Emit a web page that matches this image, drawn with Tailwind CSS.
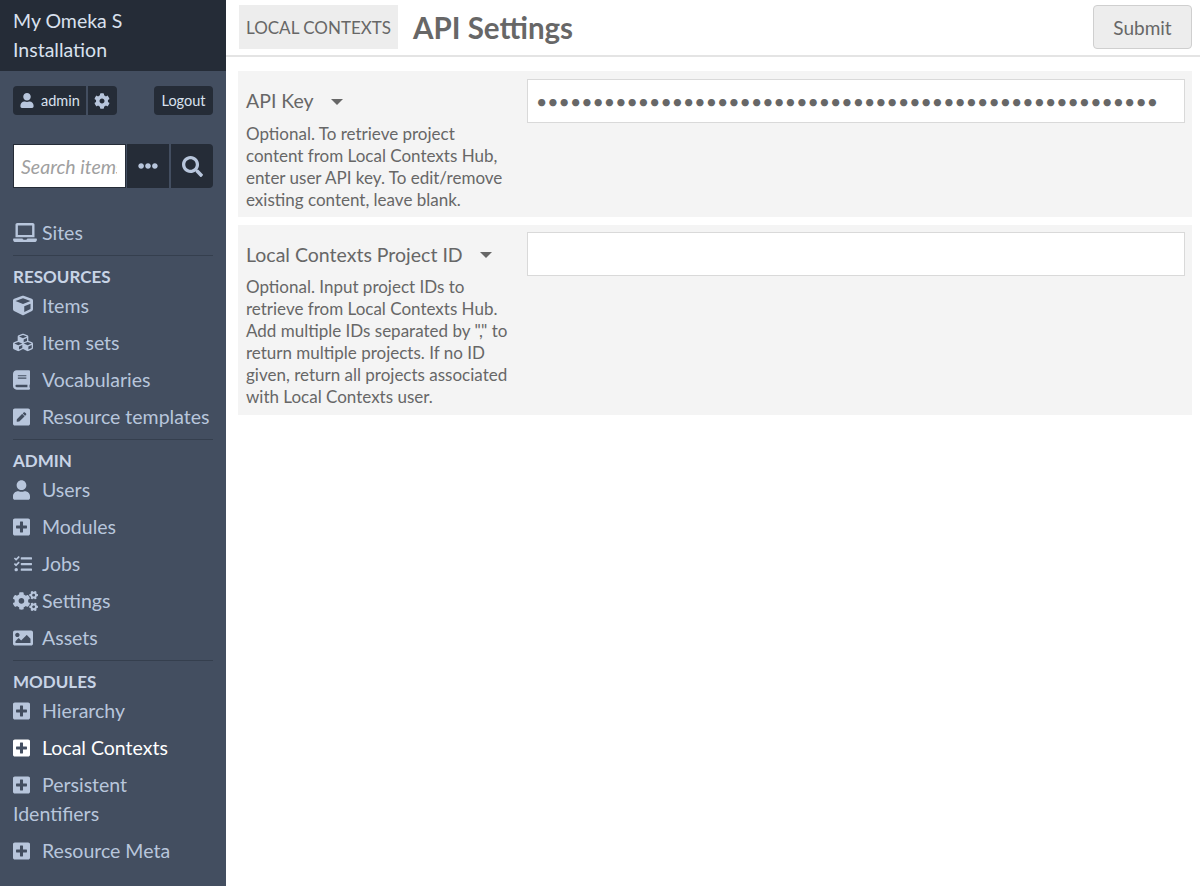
<!DOCTYPE html>
<html lang="en">
<head>
    <meta charset="UTF-8">
    <meta name="viewport" content="width=device-width, initial-scale=1.0">
    <title>API Settings</title>
    <script src="https://cdn.jsdelivr.net/npm/@tailwindcss/browser@4"></script>
</head>
<body class="bg-white font-['Lato','Liberation_Sans',sans-serif] text-[#676767]">

<svg class="hidden">
    <symbol id="i-user" viewBox="0 0 448 512"><path d="M224 256c70.7 0 128-57.3 128-128S294.7 0 224 0 96 57.3 96 128s57.3 128 128 128zm89.6 32h-16.7c-22.2 10.2-46.9 16-72.9 16s-50.6-5.8-72.9-16h-16.7C60.2 288 0 348.2 0 422.4V464c0 26.5 21.5 48 48 48h352c26.5 0 48-21.5 48-48v-41.6c0-74.2-60.2-134.4-134.4-134.4z"/></symbol>
    <symbol id="i-cog" viewBox="0 0 512 512"><path d="M487.4 315.7l-42.6-24.6c4.3-23.2 4.3-47 0-70.2l42.6-24.6c4.9-2.8 7.1-8.6 5.5-14-11.1-35.6-30-67.8-54.7-94.6-3.8-4.1-10-5.1-14.8-2.3L380.8 110c-17.9-15.4-38.5-27.3-60.8-35.1V25.8c0-5.6-3.9-10.5-9.4-11.7-36.7-8.2-74.3-7.8-109.2 0-5.5 1.2-9.4 6.1-9.4 11.7V75c-22.2 7.9-42.8 19.8-60.8 35.1L88.7 85.5c-4.9-2.8-11-1.9-14.8 2.3-24.7 26.7-43.6 58.9-54.7 94.6-1.7 5.4.6 11.2 5.5 14L67.3 221c-4.3 23.2-4.3 47 0 70.2l-42.6 24.6c-4.9 2.8-7.1 8.6-5.5 14 11.1 35.6 30 67.8 54.7 94.6 3.8 4.1 10 5.1 14.8 2.3l42.6-24.6c17.9 15.4 38.5 27.3 60.8 35.1v49.2c0 5.6 3.9 10.5 9.4 11.7 36.7 8.2 74.3 7.8 109.2 0 5.5-1.2 9.4-6.1 9.4-11.7v-49.2c22.2-7.9 42.8-19.8 60.8-35.1l42.6 24.6c4.9 2.8 11 1.9 14.8-2.3 24.7-26.7 43.6-58.9 54.7-94.6 1.5-5.5-.7-11.3-5.6-14.1zM256 336c-44.1 0-80-35.9-80-80s35.9-80 80-80 80 35.9 80 80-35.9 80-80 80z"/></symbol>
    <symbol id="i-search" viewBox="0 0 512 512"><path d="M505 442.7L405.3 343c-4.5-4.5-10.6-7-17-7H372c27.6-35.3 44-79.7 44-128C416 93.1 322.9 0 208 0S0 93.1 0 208s93.1 208 208 208c48.3 0 92.7-16.4 128-44v16.3c0 6.4 2.5 12.5 7 17l99.7 99.7c9.4 9.4 24.6 9.4 33.9 0l28.3-28.3c9.4-9.4 9.4-24.6.1-34zM208 336c-70.7 0-128-57.2-128-128 0-70.7 57.2-128 128-128 70.7 0 128 57.2 128 128 0 70.7-57.2 128-128 128z"/></symbol>
    <symbol id="i-dots" viewBox="0 0 512 512"><path d="M328 256c0 39.8-32.2 72-72 72s-72-32.2-72-72 32.2-72 72-72 72 32.2 72 72zm104-72c-39.8 0-72 32.2-72 72s32.2 72 72 72 72-32.2 72-72-32.2-72-72-72zm-352 0c-39.8 0-72 32.2-72 72s32.2 72 72 72 72-32.2 72-72-32.2-72-72-72z"/></symbol>
    <symbol id="i-laptop" viewBox="0 0 640 512"><path d="M624 416H381.54c-.74 19.81-14.71 32-32.74 32H288c-18.69 0-33.02-17.47-32.77-32H16c-8.8 0-16 7.2-16 16v16c0 35.2 28.8 64 64 64h512c35.2 0 64-28.8 64-64v-16c0-8.8-7.2-16-16-16zM576 48c0-26.4-21.6-48-48-48H112C85.6 0 64 21.6 64 48v336h512V48zm-64 272H128V64h384v256z"/></symbol>
    <symbol id="i-cube" viewBox="0 0 512 512"><path d="M239.1 6.3l-208 78c-18.7 7-31.1 25-31.1 45v225.1c0 18.2 10.3 34.8 26.5 42.9l208 104c13.5 6.8 29.4 6.8 42.9 0l208-104c16.3-8.1 26.5-24.8 26.5-42.9V129.3c0-20-12.4-37.9-31.1-44.9l-208-78C262 2.2 250 2.2 239.1 6.3zM256 68.4l192 72v1.1l-192 78-192-78v-1.1l192-72zm32 356V275.5l160-65v133.9l-160 80z"/></symbol>
    <symbol id="i-cubes" viewBox="0 0 512 512"><path d="M488.6 250.2L392 214V105.5c0-15-9.3-28.4-23.4-33.7l-100-37.5c-8.1-3.1-17.1-3.1-25.3 0l-100 37.5c-14.1 5.3-23.4 18.7-23.4 33.7V214l-96.6 36.2C9.3 255.5 0 268.9 0 283.9V394c0 13.6 7.7 26.1 19.9 32.2l100 50c10.1 5.1 22.1 5.1 32.2 0l103.9-52 103.9 52c10.1 5.1 22.1 5.1 32.2 0l100-50c12.2-6.1 19.9-18.6 19.9-32.2V283.9c0-15-9.3-28.4-23.4-33.7zM358 214.8l-85 31.9v-68.2l85-37v73.3zM154 104.1l102-38.2 102 38.2v.6l-102 41.4-102-41.4v-.6zm84 291.1l-85 42.5v-79.1l85-38.8v75.4zm0-112l-102 41.4-102-41.4v-.6l102-38.2 102 38.2v.6zm240 112l-85 42.5v-79.1l85-38.8v75.4zm0-112l-102 41.4-102-41.4v-.6l102-38.2 102 38.2v.6z"/></symbol>
    <symbol id="i-book" viewBox="0 0 448 512"><path d="M448 360V24c0-13.3-10.7-24-24-24H96C43 0 0 43 0 96v320c0 53 43 96 96 96h328c13.3 0 24-10.7 24-24v-16c0-7.5-3.5-14.3-8.9-18.7-4.2-15.4-4.2-59.3 0-74.7 5.4-4.3 8.9-11.1 8.9-18.6zM128 134c0-3.3 2.7-6 6-6h212c3.3 0 6 2.7 6 6v20c0 3.3-2.7 6-6 6H134c-3.3 0-6-2.7-6-6v-20zm0 64c0-3.3 2.7-6 6-6h212c3.3 0 6 2.7 6 6v20c0 3.3-2.7 6-6 6H134c-3.3 0-6-2.7-6-6v-20zm253.4 250H96c-17.7 0-32-14.3-32-32 0-17.6 14.4-32 32-32h285.4c-1.9 17.1-1.9 46.9 0 64z"/></symbol>
    <symbol id="i-pencil" viewBox="0 0 448 512"><path d="M400 480H48c-26.5 0-48-21.5-48-48V80c0-26.5 21.5-48 48-48h352c26.5 0 48 21.5 48 48v352c0 26.5-21.5 48-48 48zM238.1 177.9L102.4 313.6l-6.3 57.1c-.8 7.6 5.6 14.1 13.3 13.3l57.1-6.3L302.2 242c2.3-2.3 2.3-6.1 0-8.5L246.7 178c-2.5-2.4-6.3-2.4-8.6-.1zM345 165.1L314.9 135c-9.4-9.4-24.6-9.4-33.9 0l-23.1 23.1c-2.3 2.3-2.3 6.1 0 8.5l55.5 55.5c2.3 2.3 6.1 2.3 8.5 0L345 199c9.3-9.3 9.3-24.5 0-33.9z"/></symbol>
    <symbol id="i-plus" viewBox="0 0 448 512"><path d="M400 32H48C21.5 32 0 53.5 0 80v352c0 26.5 21.5 48 48 48h352c26.5 0 48-21.5 48-48V80c0-26.5-21.5-48-48-48zm-32 252c0 6.6-5.4 12-12 12h-92v92c0 6.6-5.4 12-12 12h-56c-6.6 0-12-5.4-12-12v-92H92c-6.6 0-12-5.4-12-12v-56c0-6.6 5.4-12 12-12h92v-92c0-6.6 5.4-12 12-12h56c6.6 0 12 5.4 12 12v92h92c6.6 0 12 5.4 12 12v56z"/></symbol>
    <symbol id="i-tasks" viewBox="0 0 512 512"><path d="M139.61 35.5a12 12 0 0 0-17 0L58.93 98.81l-22.7-22.12a12 12 0 0 0-17 0L3.53 92.41a12 12 0 0 0 0 17l47.59 47.4a12.78 12.78 0 0 0 17.61 0l15.59-15.62L156.52 69a12.09 12.09 0 0 0 .09-17zm0 159.19a12 12 0 0 0-17 0l-63.68 63.72-22.7-22.1a12 12 0 0 0-17 0L3.53 252a12 12 0 0 0 0 17L51 316.5a12.77 12.77 0 0 0 17.6 0l15.7-15.69 72.2-72.22a12 12 0 0 0 .09-16.9zM64 368c-26.49 0-48.59 21.5-48.59 48S37.53 464 64 464a48 48 0 0 0 0-96zm432 16H208a16 16 0 0 0-16 16v32a16 16 0 0 0 16 16h288a16 16 0 0 0 16-16v-32a16 16 0 0 0-16-16zm0-320H208a16 16 0 0 0-16 16v32a16 16 0 0 0 16 16h288a16 16 0 0 0 16-16V80a16 16 0 0 0-16-16zm0 160H208a16 16 0 0 0-16 16v32a16 16 0 0 0 16 16h288a16 16 0 0 0 16-16v-32a16 16 0 0 0-16-16z"/></symbol>
    <symbol id="i-cogs" viewBox="0 0 640 512"><path d="M512.1 191l-8.2 14.3c-3 5.3-9.4 7.5-15.1 5.4-11.8-4.4-22.6-10.7-32.1-18.6-4.6-3.8-5.8-10.5-2.8-15.7l8.2-14.3c-6.9-8-12.3-17.3-15.9-27.4h-16.5c-6 0-11.2-4.3-12.2-10.3-2-12-2.1-24.6 0-37.1 1-6 6.2-10.4 12.2-10.4h16.5c3.6-10.1 9-19.4 15.9-27.4l-8.2-14.3c-3-5.2-1.9-11.9 2.8-15.7 9.5-7.9 20.4-14.2 32.1-18.6 5.7-2.1 12.1.1 15.1 5.4l8.2 14.3c10.5-1.9 21.2-1.9 31.7 0L552 6.3c3-5.3 9.4-7.5 15.1-5.4 11.8 4.4 22.6 10.7 32.1 18.6 4.6 3.8 5.8 10.5 2.8 15.7l-8.2 14.3c6.9 8 12.3 17.3 15.9 27.4h16.5c6 0 11.2 4.3 12.2 10.3 2 12 2.1 24.6 0 37.1-1 6-6.2 10.4-12.2 10.4h-16.5c-3.6 10.1-9 19.4-15.9 27.4l8.2 14.3c3 5.2 1.9 11.9-2.8 15.7-9.5 7.9-20.4 14.2-32.1 18.6-5.7 2.1-12.1-.1-15.1-5.4l-8.2-14.3c-10.4 1.9-21.2 1.9-31.7 0zm-10.5-58.8c38.5 29.6 82.4-14.3 52.8-52.8-38.5-29.7-82.4 14.3-52.8 52.8zM386.3 286.1l33.7 16.8c10.1 5.8 14.5 18.1 10.5 29.1-8.9 24.2-26.4 46.4-42.6 65.8-7.4 8.9-20.2 11.1-30.3 5.3l-29.1-16.8c-16 13.7-34.6 24.6-54.9 31.7v33.6c0 11.6-8.3 21.6-19.7 23.6-24.6 4.2-50.4 4.4-75.9 0-11.5-2-20-11.9-20-23.6V418c-20.3-7.2-38.9-18-54.9-31.7L74 403c-10 5.8-22.9 3.6-30.3-5.3-16.2-19.4-33.3-41.6-42.2-65.7-4-10.9.4-23.2 10.5-29.1l33.3-16.8c-3.9-20.9-3.9-42.4 0-63.4L12 205.8c-10.1-5.8-14.6-18.1-10.5-29 8.9-24.2 26-46.4 42.2-65.8 7.4-8.9 20.2-11.1 30.3-5.3l29.1 16.8c16-13.7 34.6-24.6 54.9-31.7V57.1c0-11.5 8.2-21.5 19.6-23.5 24.6-4.2 50.5-4.4 76-.1 11.5 2 20 11.9 20 23.6v33.6c20.3 7.2 38.9 18 54.9 31.7l29.1-16.8c10-5.8 22.9-3.6 30.3 5.3 16.2 19.4 33.2 41.6 42.1 65.8 4 10.9.1 23.2-10 29.1l-33.7 16.8c3.9 21 3.9 42.5 0 63.5zm-117.6 21.1c59.2-77-28.7-164.9-105.7-105.7-59.2 77 28.7 164.9 105.7 105.7zm243.4 182.7l-8.2 14.3c-3 5.3-9.4 7.5-15.1 5.4-11.8-4.4-22.6-10.7-32.1-18.6-4.6-3.8-5.8-10.5-2.8-15.7l8.2-14.3c-6.9-8-12.3-17.3-15.9-27.4h-16.5c-6 0-11.2-4.3-12.2-10.3-2-12-2.1-24.6 0-37.1 1-6 6.2-10.4 12.2-10.4h16.5c3.6-10.1 9-19.4 15.9-27.4l-8.2-14.3c-3-5.2-1.9-11.9 2.8-15.7 9.5-7.9 20.4-14.2 32.1-18.6 5.7-2.1 12.1.1 15.1 5.4l8.2 14.3c10.5-1.9 21.2-1.9 31.7 0l8.2-14.3c3-5.3 9.4-7.5 15.1-5.4 11.8 4.4 22.6 10.7 32.1 18.6 4.6 3.8 5.8 10.5 2.8 15.7l-8.2 14.3c6.9 8 12.3 17.3 15.9 27.4h16.5c6 0 11.2 4.3 12.2 10.3 2 12 2.1 24.6 0 37.1-1 6-6.2 10.4-12.2 10.4h-16.5c-3.6 10.1-9 19.4-15.9 27.4l8.2 14.3c3 5.2 1.9 11.9-2.8 15.7-9.5 7.9-20.4 14.2-32.1 18.6-5.7 2.1-12.1-.1-15.1-5.4l-8.2-14.3c-10.4 1.9-21.2 1.9-31.7 0zM501.6 431c38.5 29.6 82.4-14.3 52.8-52.8-38.5-29.6-82.4 14.3-52.8 52.8z"/></symbol>
    <symbol id="i-image" viewBox="0 0 512 512"><path d="M464 448H48c-26.51 0-48-21.49-48-48V112c0-26.51 21.49-48 48-48h416c26.51 0 48 21.49 48 48v288c0 26.51-21.49 48-48 48zM112 120c-30.928 0-56 25.072-56 56s25.072 56 56 56 56-25.072 56-56-25.072-56-56-56zM64 384h384V272l-87.515-87.515c-4.686-4.686-12.284-4.686-16.971 0L208 320l-55.515-55.515c-4.686-4.686-12.284-4.686-16.971 0L64 336v48z"/></symbol>
</svg>

<div class="flex h-[886px] overflow-hidden">

    <!-- sidebar -->
    <aside class="w-[226px] shrink-0 bg-[#434e60] text-[#b8c6dc]">
        <div class="h-[71px] bg-[#252c37] px-[13px] pt-[6px] text-[19.5px] leading-[29px] text-[#d9e1ee]">My Omeka S<br>Installation</div>

        <div class="mx-[13px] mt-[15px] flex h-[29px] justify-between text-[14.5px]">
            <div class="flex gap-[2px]">
                <div class="flex items-center gap-[7px] rounded-l bg-[#252c37] pl-[7px] pr-[6px] text-[#d9e1ee]">
                    <svg class="h-[15px] w-[14px] fill-[#b8c6dc]"><use href="#i-user"/></svg>admin
                </div>
                <div class="flex w-[29px] items-center justify-center rounded-r bg-[#252c37]">
                    <svg class="h-[16px] w-[16px] fill-[#b8c6dc]"><use href="#i-cog"/></svg>
                </div>
            </div>
            <div class="flex w-[59px] items-center justify-center rounded bg-[#252c37] text-[#d9e1ee]">Logout</div>
        </div>

        <div class="mx-[13px] mt-[29px] flex h-[44px]">
            <input type="text" placeholder="Search items" class="w-[113px] min-w-0 border border-[#252c37] bg-white pl-[7px] pr-2 pt-[2px] text-[19.5px] italic placeholder:text-[#a0a0a0] focus:outline-none">
            <div class="ml-px flex w-[42px] items-center justify-center bg-[#252c37]">
                <svg class="h-[20px] w-[20px] fill-[#b8c6dc]"><use href="#i-dots"/></svg>
            </div>
            <div class="ml-[2px] flex w-[42px] items-center justify-center rounded-r bg-[#252c37]">
                <svg class="h-[21px] w-[21px] fill-[#b8c6dc]"><use href="#i-search"/></svg>
            </div>
        </div>

        <nav class="mx-[13px] mt-[30px] text-[19.5px] leading-[29px]">
            <a class="flex h-[29px] items-center gap-[5px]"><svg class="h-[19px] w-[24px] fill-current"><use href="#i-laptop"/></svg>Sites</a>
            <div class="mt-[8px] border-t border-[#353f4e] pt-[6px] text-[17px] font-bold leading-[29px] text-[#c8d4e6]">RESOURCES</div>
            <ul class="flex flex-col gap-2">
                <li class="flex h-[29px] items-center gap-[9px]"><svg class="h-[21px] w-[20px] fill-current"><use href="#i-cube"/></svg>Items</li>
                <li class="flex h-[29px] items-center gap-[9px]"><svg class="h-[21px] w-[20px] fill-current"><use href="#i-cubes"/></svg>Item sets</li>
                <li class="flex h-[29px] items-center gap-[12px]"><svg class="h-[20px] w-[17px] fill-current"><use href="#i-book"/></svg>Vocabularies</li>
                <li class="flex h-[29px] items-center gap-[12px]"><svg class="h-[20px] w-[17px] fill-current"><use href="#i-pencil"/></svg>Resource templates</li>
            </ul>
            <div class="mt-[8px] border-t border-[#353f4e] pt-[6px] text-[17px] font-bold leading-[29px] text-[#c8d4e6]">ADMIN</div>
            <ul class="flex flex-col gap-2">
                <li class="flex h-[29px] items-center gap-[12px]"><svg class="h-[20px] w-[17px] fill-current"><use href="#i-user"/></svg>Users</li>
                <li class="flex h-[29px] items-center gap-[12px]"><svg class="h-[20px] w-[17px] fill-current"><use href="#i-plus"/></svg>Modules</li>
                <li class="flex h-[29px] items-center gap-[9px]"><svg class="h-[18px] w-[20px] fill-current"><use href="#i-tasks"/></svg>Jobs</li>
                <li class="flex h-[29px] items-center gap-[4px]"><svg class="h-[20px] w-[25px] fill-current"><use href="#i-cogs"/></svg>Settings</li>
                <li class="flex h-[29px] items-center gap-[9px]"><svg class="h-[20px] w-[20px] fill-current"><use href="#i-image"/></svg>Assets</li>
            </ul>
            <div class="mt-[8px] border-t border-[#353f4e] pt-[6px] text-[17px] font-bold leading-[29px] text-[#c8d4e6]">MODULES</div>
            <ul class="flex flex-col gap-2">
                <li class="flex h-[29px] items-center gap-[12px]"><svg class="h-[20px] w-[17px] fill-current"><use href="#i-plus"/></svg>Hierarchy</li>
                <li class="flex h-[29px] items-center gap-[12px] text-white"><svg class="h-[20px] w-[17px] fill-current"><use href="#i-plus"/></svg>Local Contexts</li>
                <li><svg class="mr-[12px] inline-block h-[20px] w-[17px] fill-current align-[-3px]"><use href="#i-plus"/></svg>Persistent<br>Identifiers</li>
                <li class="flex h-[29px] items-center gap-[12px]"><svg class="h-[20px] w-[17px] fill-current"><use href="#i-plus"/></svg>Resource Meta</li>
            </ul>
        </nav>
    </aside>

    <!-- main -->
    <main class="flex-1">
        <header class="flex h-[57px] items-start border-b-2 border-[#e4e4e4] pl-[13px] pr-2 pt-[5px]">
            <div class="flex h-[44px] items-center bg-[#ededed] px-[7px] pt-[2px] text-[17px]">LOCAL CONTEXTS</div>
            <h1 class="ml-[15px] pt-px text-[29.5px] font-bold leading-[44px]">API Settings</h1>
            <button class="ml-auto h-[44px] w-[99px] rounded border border-[#cfcfcf] bg-[#ededed] pt-[2px] text-[19px]">Submit</button>
        </header>

        <form class="ml-[12px] mr-2 mt-[14px] flex flex-col gap-2">
            <div class="flex bg-[#f4f4f4] pb-[6px] pl-2 pr-[7px] pt-2">
                <div class="w-[281px] shrink-0 pr-4">
                    <div class="flex h-[44px] items-center text-[19.5px]">API Key<span class="ml-[17px] mt-[1px] border-x-[6px] border-t-[6px] border-x-transparent border-t-[#676767]"></span></div>
                    <p class="text-[17px] leading-[22px]">Optional. To retrieve project content from Local Contexts Hub, enter user API key. To edit/remove existing content, leave blank.</p>
                </div>
                <input type="password" value="0123456789012345678901234567890123456789012345678901234" class="h-[44px] min-w-0 flex-1 border border-[#d9d9d9] bg-white px-2 text-[19.5px] text-[#676767] focus:outline-none">
            </div>
            <div class="flex bg-[#f4f4f4] px-2 py-[7px] pr-[7px]">
                <div class="w-[281px] shrink-0 pr-4">
                    <div class="flex h-[44px] items-center pt-px text-[19.5px]">Local Contexts Project ID<span class="ml-[17px] mt-[1px] border-x-[6px] border-t-[6px] border-x-transparent border-t-[#676767]"></span></div>
                    <p class="text-[17px] leading-[22px]">Optional. Input project IDs to retrieve from Local Contexts Hub. Add multiple IDs separated by "," to return multiple projects. If no ID given, return all projects associated with Local Contexts user.</p>
                </div>
                <input type="text" class="h-[44px] min-w-0 flex-1 border border-[#d9d9d9] bg-white px-2 text-[19.5px] focus:outline-none">
            </div>
        </form>
    </main>
</div>

</body>
</html>
